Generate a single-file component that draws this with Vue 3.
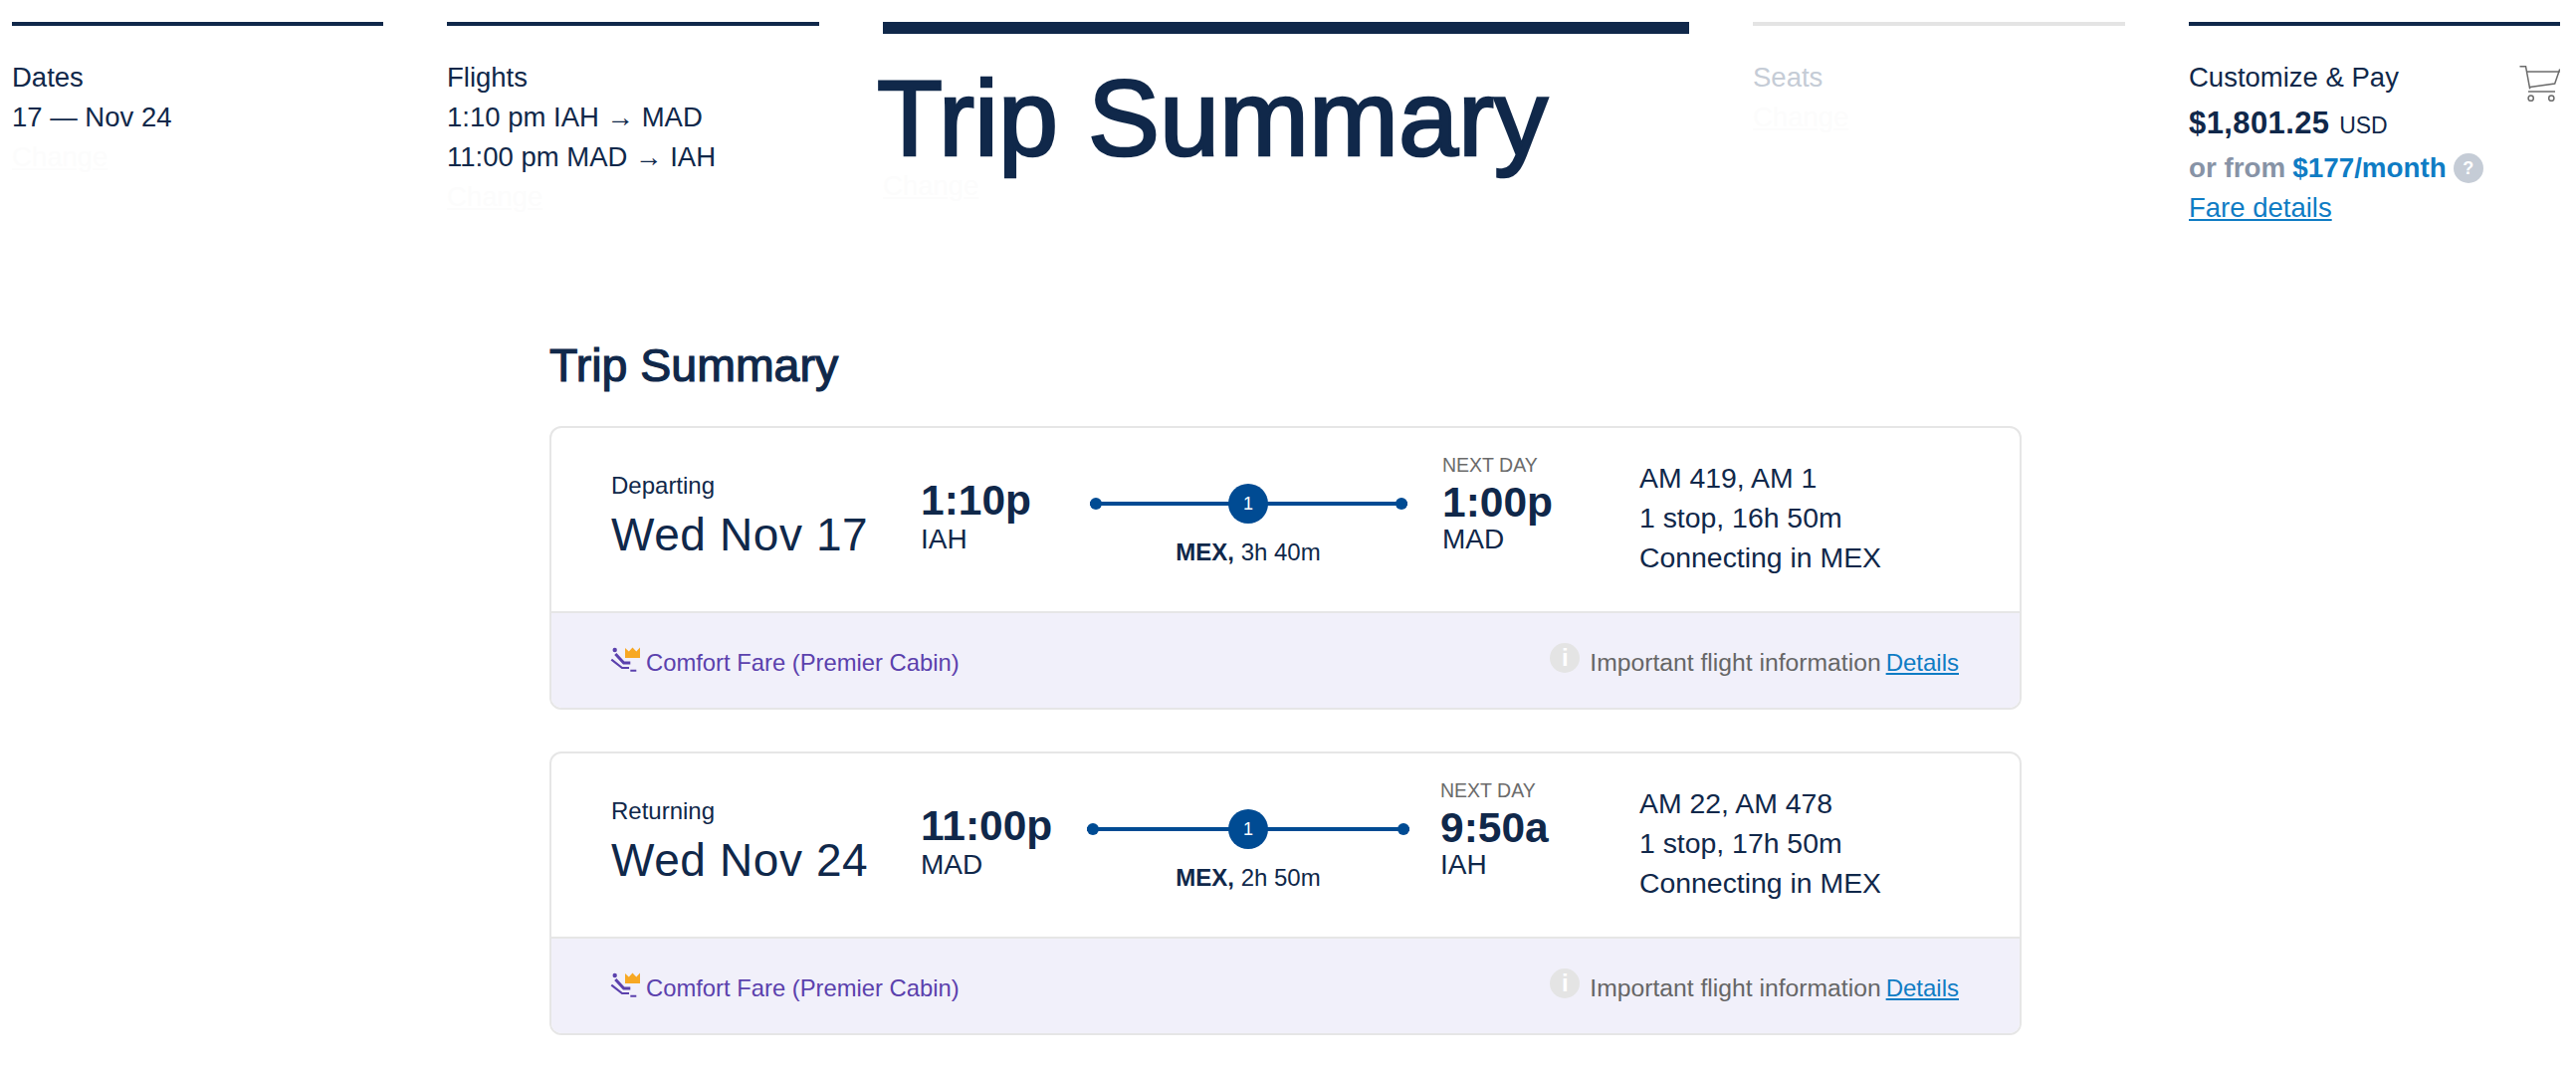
<template>
  <div class="page">
    <!-- Etapes -->
    <nav class="steps">
      <div class="step">
        <div class="bar"></div>
        <div class="step-body">
          <div class="line">Dates</div>
          <div class="line">17 — Nov 24</div>
          <a class="line change">Change</a>
        </div>
      </div>

      <div class="step">
        <div class="bar"></div>
        <div class="step-body">
          <div class="line">Flights</div>
          <div class="line">1:10 pm IAH → MAD</div>
          <div class="line">11:00 pm MAD → IAH</div>
          <a class="line change">Change</a>
        </div>
      </div>

      <div class="step step-active">
        <div class="bar bar-active"></div>
        <div class="step-body-active">
          <h1 class="page-title">Trip Summary</h1>
          <a class="line change">Change</a>
        </div>
      </div>

      <div class="step">
        <div class="bar bar-todo"></div>
        <div class="step-body">
          <div class="line todo">Seats</div>
          <a class="line change">Change</a>
        </div>
      </div>

      <div class="step">
        <div class="bar"></div>
        <div class="step-body">
          <div class="pay-head">
            <div class="line">Customize &amp; Pay</div>
            <svg class="cart" viewBox="21 16 41 36" fill="none" stroke="#6b6b6b" stroke-width="1.5">
              <path d="M21.5 16.7h6l4.2 22.6" />
              <path d="M28 22h33.7" />
              <path d="M61.7 19.5l-5 14.5-25 3.4" />
              <path d="M30 42h27" />
              <circle cx="32.7" cy="48.7" r="2.6" />
              <circle cx="53.3" cy="48.7" r="2.6" />
            </svg>
          </div>
          <div class="price"><strong>$1,801.25</strong> <span class="currency">USD</span></div>
          <div class="monthly">
            <span>or from</span>
            <span class="monthly-amount">$177/month</span>
            <span class="help">?</span>
          </div>
          <a class="line fare-link">Fare details</a>
        </div>
      </div>
    </nav>

    <!-- Resume -->
    <main class="summary">
      <h2 class="summary-title">Trip Summary</h2>

      <section v-for="flight in flights" :key="flight.label" class="card">
        <div class="card-main">
          <div class="col-date">
            <div class="label">{{ flight.label }}</div>
            <div class="date">{{ flight.date }}</div>
          </div>

          <div class="col-time">
            <div class="time">{{ flight.depTime }}</div>
            <div class="airport">{{ flight.from }}</div>
          </div>

          <div class="col-route">
            <div class="route" :class="{ 'route-wide': flight.wide }">
              <span class="route-dot"></span>
              <span class="route-stop">1</span>
              <span class="route-dot"></span>
            </div>
            <div class="route-label"><strong>MEX,</strong> {{ flight.layover }}</div>
          </div>

          <div class="col-time col-arrival" :class="{ 'col-arrival-wide': flight.wide }">
            <div class="next-day">NEXT DAY</div>
            <div class="time">{{ flight.arrTime }}</div>
            <div class="airport">{{ flight.to }}</div>
          </div>

          <div class="col-info">
            <div>{{ flight.numbers }}</div>
            <div>{{ flight.duration }}</div>
            <div>Connecting in MEX</div>
          </div>
        </div>

        <div class="card-foot">
          <div class="fare">
            <svg class="fare-icon" viewBox="0 0 32 26">
              <circle cx="4.7" cy="4" r="2.2" fill="#5b41ad" />
              <path d="M1.3 13.7l10.7 8.3h7" fill="none" stroke="#5b41ad" stroke-width="2.2" />
              <path d="M5.3 8l8.4 9h6.6" fill="none" stroke="#5b41ad" stroke-width="3" />
              <path d="M20.3 24.7h6" stroke="#5b41ad" stroke-width="2" />
              <path d="M15 2l3.8 3.6L22.5 1.6l3.8 4 3.7-4V12H15z" fill="#f7a823" />
            </svg>
            <span class="fare-text">Comfort Fare (Premier Cabin)</span>
          </div>
          <div class="notice">
            <span class="notice-icon">i</span>
            <span class="notice-text">Important flight information</span>
            <a class="notice-link">Details</a>
          </div>
        </div>
      </section>
    </main>
  </div>
</template>

<script setup>
const flights = [
  {
    label: 'Departing',
    date: 'Wed Nov 17',
    depTime: '1:10p',
    from: 'IAH',
    layover: '3h 40m',
    arrTime: '1:00p',
    to: 'MAD',
    numbers: 'AM 419, AM 1',
    duration: '1 stop, 16h 50m',
    wide: false
  },
  {
    label: 'Returning',
    date: 'Wed Nov 24',
    depTime: '11:00p',
    from: 'MAD',
    layover: '2h 50m',
    arrTime: '9:50a',
    to: 'IAH',
    numbers: 'AM 22, AM 478',
    duration: '1 stop, 17h 50m',
    wide: true
  }
]
</script>

<style>
body {
  background: #fff;
}
</style>

<style scoped>
.page {
  font-family: "Liberation Sans", Arial, sans-serif;
  color: #10284a;
  height: 1076px;
  overflow: hidden;
  box-sizing: border-box;
  padding-top: 22px;
}

.steps {
  display: grid;
  grid-template-columns: 373px 374px 810px 374px 373px;
  column-gap: 64px;
  padding-left: 12px;
  height: 290px;
}

.bar {
  height: 4px;
  background: #10284a;
}

.bar-active {
  height: 12px;
}

.bar-todo {
  background: #e4e4e4;
}

.step-body {
  padding-top: 32px;
  font-size: 27.5px;
}

.step-body-active {
  padding-top: 36px;
  font-size: 27.5px;
}

.line {
  display: block;
  line-height: 40px;
  white-space: nowrap;
}

.change {
  color: #fcfcfc;
  text-decoration: underline;
}

.todo {
  color: #c5ccd6;
}

.page-title {
  margin: 0 0 0 -6px;
  font-size: 108px;
  line-height: 97px;
  font-weight: 400;
  -webkit-text-stroke: 2.6px #10284a;
  white-space: nowrap;
}

.pay-head {
  display: flex;
  justify-content: space-between;
}

.cart {
  width: 41px;
  height: 36px;
  margin: 8px 0 -4px;
}

.price {
  margin-top: 6px;
  line-height: 40px;
  font-size: 31px;
}

.price strong {
  letter-spacing: 0.4px;
}

.currency {
  font-size: 23px;
  margin-left: 1px;
}

.monthly {
  margin-top: 3px;
  display: flex;
  align-items: center;
  gap: 7px;
  line-height: 40px;
  font-size: 27.8px;
  font-weight: 700;
  color: #8793a6;
}

.monthly-amount {
  color: #0f7cc4;
}

.help {
  width: 30px;
  height: 30px;
  border-radius: 50%;
  background: #c5ccd6;
  color: #fff;
  font-size: 18px;
  line-height: 30px;
  text-align: center;
}

.fare-link {
  color: #0f7cc4;
  text-decoration: underline;
}

.summary {
  width: 1479px;
  margin-left: 552px;
  padding-top: 28px;
}

.summary-title {
  margin: 0 0 34px;
  font-size: 46.5px;
  line-height: 54px;
  font-weight: 400;
  -webkit-text-stroke: 1.2px #10284a;
}

.card {
  box-sizing: border-box;
  height: 285px;
  margin-bottom: 42px;
  border: 2px solid #e6e6e6;
  border-radius: 12px;
  overflow: hidden;
  background: #fff;
}

.card-main {
  box-sizing: border-box;
  height: 186px;
  padding-left: 60px;
  display: grid;
  grid-template-columns: 311px 163px 332px 227px 1fr;
  border-bottom: 2px solid #e6e6e6;
}

.col-date {
  padding-top: 42px;
}

.label {
  font-size: 24px;
  line-height: 32px;
}

.date {
  font-size: 46px;
  line-height: 54px;
  margin-top: 6px;
  letter-spacing: 0.6px;
}

.col-time {
  padding-top: 50px;
}

.time {
  font-size: 42.5px;
  line-height: 46px;
  font-weight: 700;
}

.airport {
  font-size: 28px;
  line-height: 34px;
  margin-top: -1px;
}

.col-arrival {
  padding-top: 25px;
  padding-left: 29px;
}

.col-arrival .time {
  margin-top: 3px;
}

.col-arrival .airport {
  margin-top: -3px;
}

.col-arrival-wide {
  padding-left: 27px;
}

.next-day {
  font-size: 19.5px;
  line-height: 24px;
  color: #6b6b6b;
}

.col-route {
  padding-top: 56px;
  display: flex;
  flex-direction: column;
  align-items: center;
}

.route {
  width: 319px;
  height: 40px;
  display: flex;
  align-items: center;
  justify-content: space-between;
  background: linear-gradient(#004b93, #004b93) center / 100% 4px no-repeat;
}

.route-wide {
  width: 324px;
}

.route-dot {
  width: 12px;
  height: 12px;
  border-radius: 50%;
  background: #004b93;
}

.route-stop {
  width: 40px;
  height: 40px;
  border-radius: 50%;
  background: #004b93;
  color: #fff;
  font-size: 18px;
  line-height: 40px;
  text-align: center;
}

.route-label {
  margin-top: 14px;
  font-size: 24px;
  line-height: 30px;
  white-space: nowrap;
}

.col-info {
  padding-top: 30px;
  font-size: 28.4px;
  line-height: 40px;
  white-space: nowrap;
}

.card-foot {
  box-sizing: border-box;
  height: 95px;
  padding: 4px 61px 0 61px;
  display: flex;
  align-items: center;
  justify-content: space-between;
  background: #f1f0fa;
  font-size: 24px;
}

.fare {
  display: flex;
  align-items: center;
  gap: 4px;
  color: #5b41ad;
}

.fare-text {
  font-size: 23.8px;
}

.fare-icon {
  width: 32px;
  height: 26px;
  margin: -8px 0 0 -2px;
}

.notice {
  display: flex;
  align-items: center;
  color: #666;
}

.notice-icon {
  width: 30px;
  height: 30px;
  margin: -10px 10px 0 0;
  border-radius: 50%;
  background: #e4e4e4;
  color: #fff;
  font-size: 24px;
  font-weight: 700;
  line-height: 30px;
  text-align: center;
}

.notice-text {
  font-size: 24.7px;
}

.notice-link {
  margin-left: 5px;
  color: #0f7cc4;
  text-decoration: underline;
}
</style>
